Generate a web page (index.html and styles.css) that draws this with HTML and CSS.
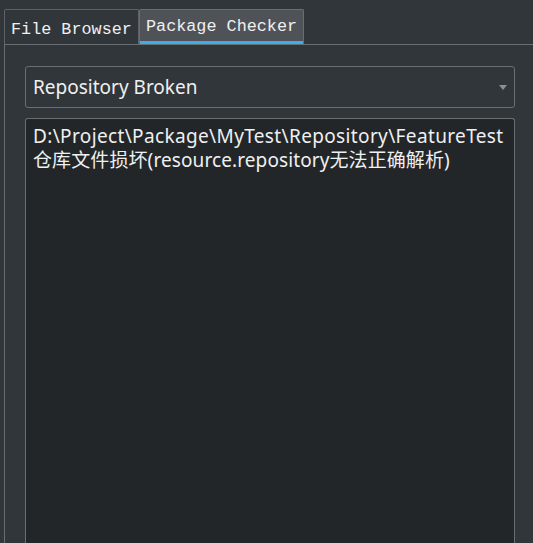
FILE: index.html
```html
<!DOCTYPE html>
<html>
<head>
<meta charset="utf-8">
<link rel="stylesheet" href="styles.css">
</head>
<body>
<div class="window">
  <div class="tabbar">
    <div class="tab">File Browser</div>
    <div class="tab active">Package Checker</div>
  </div>
  <div class="pane">
    <div class="combo">
      <span class="combo-text">Repository Broken</span>
      <svg class="arrow" width="8" height="5" viewBox="0 0 8 5"><path d="M0 0H8L4 5Z" fill="#8d9093"/></svg>
    </div>
    <div class="textbox">
      <div class="line path">D:\Project\Package\MyTest\Repository\FeatureTest</div>
      <div class="line">仓库文件损坏(resource.repository无法正确解析)</div>
    </div>
  </div>
</div>
</body>
</html>
```
FILE: styles.css
```css
html, body {
  margin: 0;
  padding: 0;
  height: 100%;
  background: #31363b;
  overflow: hidden;
}
.window {
  display: flex;
  flex-direction: column;
  height: 100%;
}
.tabbar {
  display: flex;
  padding: 9px 0 0 4px;
}
.tab {
  height: 35px;
  box-sizing: border-box;
  border: 1px solid #5e6266;
  border-bottom: none;
  border-radius: 2px 2px 0 0;
  padding: 2px 5px 0 6px;
  font-family: "Liberation Mono", monospace;
  font-size: 16.8px;
  color: #eff0f1;
  line-height: 36px;
  white-space: nowrap;
}
.tab:first-child { width: 135px; }
.tab.active {
  width: 165px;
  padding-top: 0;
  background: #4f5358;
  border-color: #6a6e72;
  box-shadow: inset 0 -3px 0 #3daee9;
  line-height: 34px;
}
.pane {
  flex: 1;
  margin-left: 4px;
  border-left: 1px solid #6b6e71;
  border-top: 1px solid #6b6e71;
  padding: 21px 18px 0 20px;
  display: flex;
  flex-direction: column;
  gap: 10px;
  min-height: 0;
}
.combo {
  height: 42px;
  box-sizing: border-box;
  border: 1px solid #6b6e71;
  border-radius: 3px;
  display: flex;
  align-items: center;
  justify-content: space-between;
  padding: 0 7px 0 7px;
  font-family: "Noto Sans", sans-serif;
  font-size: 19px;
  color: #eff0f1;
}
.combo-text { margin-top: -1px; }
.textbox {
  flex: 1;
  background: #232629;
  border: 1px solid #6b6e71;
  border-bottom: none;
  border-radius: 3px 3px 0 0;
  padding: 5px 7px 0 7px;
  font-family: "Noto Sans", "Noto Sans CJK SC", sans-serif;
  font-size: 19px;
  letter-spacing: 0.1px;
  line-height: 24px;
  color: #eff0f1;
}
.line { white-space: nowrap; }
.line.path { letter-spacing: 0.36px; }
```
